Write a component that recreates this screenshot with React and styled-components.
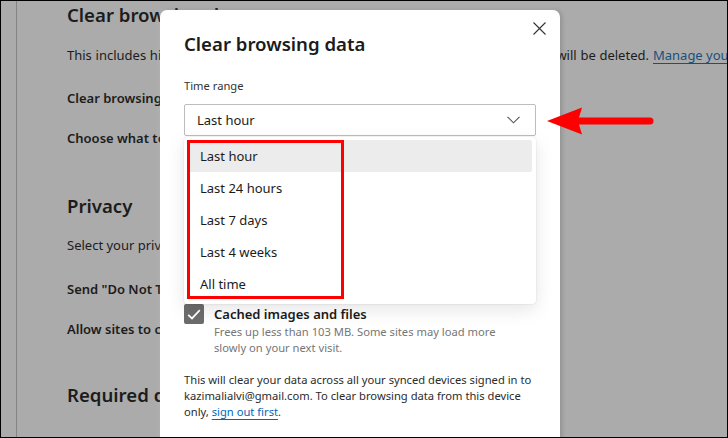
import React from "react";
import styled, { createGlobalStyle } from "styled-components";

const Global = createGlobalStyle`
  html, body { margin: 0; padding: 0; background: #fff; }
  body { font-family: "Noto Sans", "Open Sans", sans-serif; }
  * { box-sizing: border-box; }
`;

const Frame = styled.div`
  position: relative;
  width: 728px;
  height: 438px;
  overflow: hidden;
  display: flex;
  background: #ababab;
  border: 1px solid #000;
  font-family: "Noto Sans", "Open Sans", sans-serif;
`;

const Rail = styled.div`
  width: 16px;
  flex-shrink: 0;
  border-right: 1px solid #858585;
`;

const Page = styled.div`
  display: flex;
  flex-direction: column;
  padding-left: 50px;
  white-space: nowrap;
  color: #1c1c1c;
`;

const SectionTitle = styled.div`
  font-size: 18.6px;
  line-height: 28px;
  font-weight: 600;
  margin-top: ${(p) => p.$mt || 0}px;
`;

const PageText = styled.div`
  font-size: 13px;
  line-height: 20px;
  font-weight: ${(p) => (p.$strong ? 600 : 400)};
  margin-top: ${(p) => p.$mt || 0}px;
  word-spacing: ${(p) => (p.$loose ? "0.35px" : "normal")};
`;

const PageLink = styled.span`
  margin-left: 4px;
  word-spacing: normal;
  color: #18507e;
  text-decoration: underline;
  text-underline-offset: 3px;
`;

const Dialog = styled.div`
  position: absolute;
  left: 159px;
  top: 9px;
  width: 400px;
  height: 460px;
  background: #fff;
  border-radius: 7px 7px 0 0;
  box-shadow: 2px 0 4px rgba(0, 0, 0, 0.16), -1px 0 4px rgba(255, 255, 255, 0.15);
  padding: 0 24px;
  display: flex;
  flex-direction: column;
  color: #1b1b1b;
`;

const DialogHeader = styled.div`
  display: flex;
  justify-content: space-between;
  align-items: flex-start;
  margin-right: -10px;
`;

const DialogTitle = styled.div`
  margin-top: 20px;
  font-size: 18.6px;
  line-height: 28px;
  font-weight: 600;
`;

const CloseButton = styled.button`
  margin-top: 11px;
  width: 14px;
  height: 14px;
  padding: 0;
  border: 0;
  background: none;
  display: flex;
  align-items: center;
  justify-content: center;
`;

const FieldLabel = styled.div`
  margin-top: 20px;
  font-size: 11.2px;
  line-height: 16px;
  color: #333;
`;

const SelectWrap = styled.div`
  position: relative;
  margin-top: 10px;
  width: 352px;
`;

const SelectBox = styled.div`
  height: 32px;
  border: 1px solid #bdbdbd;
  border-radius: 2px;
  display: flex;
  align-items: center;
  justify-content: space-between;
  padding: 0 15px 0 12px;
  font-size: 13px;
  line-height: 30px;
  color: #1b1b1b;
`;

const Menu = styled.div`
  position: absolute;
  top: calc(100% + 1px);
  left: 0;
  right: 0;
  background: #fff;
  border-radius: 4px;
  padding: 3px 4px 4px;
  box-shadow: 0 0 2px rgba(0, 0, 0, 0.14), 0 6px 18px rgba(0, 0, 0, 0.1);
  z-index: 2;
`;

const MenuItem = styled.div`
  height: 32px;
  border-radius: 2px;
  padding-left: 12px;
  font-size: 13px;
  line-height: 32px;
  color: #1b1b1b;
  background: ${(p) => (p.$active ? "#ececec" : "transparent")};
`;

const CheckRow = styled.div`
  margin-top: 168px;
  display: flex;
  align-items: flex-start;
  gap: 10px;
`;

const CheckBox = styled.div`
  width: 20px;
  height: 20px;
  flex-shrink: 0;
  border-radius: 2px;
  background: #6c6c6c;
  display: flex;
  align-items: center;
  justify-content: center;
`;

const CheckText = styled.div`
  display: flex;
  flex-direction: column;
`;

const CheckLabel = styled.div`
  font-size: 13px;
  line-height: 20px;
  font-weight: 600;
  color: #1b1b1b;
`;

const CheckDesc = styled.div`
  font-size: 11.2px;
  line-height: 16px;
  color: #767676;
  white-space: nowrap;
`;

const Note = styled.div`
  margin-top: 16px;
  font-size: 11.2px;
  line-height: 16px;
  color: #2b2b2b;
  white-space: nowrap;
`;

const NoteLink = styled.span`
  color: #0067b8;
  text-decoration: underline;
  text-underline-offset: 3px;
`;

const Highlight = styled.div`
  position: absolute;
  left: 186px;
  top: 139px;
  width: 157px;
  height: 159px;
  border: 3px solid #ff0000;
  z-index: 5;
`;

const Arrow = styled.svg`
  position: absolute;
  left: 543px;
  top: 104px;
  z-index: 5;
`;

const options = ["Last hour", "Last 24 hours", "Last 7 days", "Last 4 weeks", "All time"];

export default function App() {
  return (
    <>
      <Global />
      <Frame>
        <Rail />
        <Page>
          <SectionTitle $mt={0}>Clear browsing data</SectionTitle>
          <PageText $mt={16} $loose>
            This includes history, passwords, cookies, and more. Only data from this profile{" "}
            will be deleted.<PageLink>Manage your data</PageLink>
          </PageText>
          <PageText $strong $mt={23}>Clear browsing data now</PageText>
          <PageText $strong $mt={20}>Choose what to clear every time you close the browser</PageText>
          <SectionTitle $mt={44}>Privacy</SectionTitle>
          <PageText $mt={15}>Select your privacy settings for Microsoft Edge.</PageText>
          <PageText $strong $mt={24}>Send "Do Not Track" requests</PageText>
          <PageText $strong $mt={20}>Allow sites to check if you have payment methods saved</PageText>
          <SectionTitle $mt={42}>Required diagnostic data</SectionTitle>
        </Page>

        <Dialog>
          <DialogHeader>
            <DialogTitle>Clear browsing data</DialogTitle>
            <CloseButton aria-label="Close">
              <svg width="13" height="13" viewBox="0 0 13 13">
                <path d="M0.5 0.5 L12.5 12.5 M12.5 0.5 L0.5 12.5" stroke="#333" strokeWidth="1.1" fill="none" />
              </svg>
            </CloseButton>
          </DialogHeader>
          <FieldLabel>Time range</FieldLabel>
          <SelectWrap>
            <SelectBox>
              <span>Last hour</span>
              <svg width="13" height="8" viewBox="0 0 13 8">
                <path d="M0.5 0.8 L6.5 6.8 L12.5 0.8" stroke="#555" strokeWidth="1.1" fill="none" />
              </svg>
            </SelectBox>
            <Menu>
              {options.map((o, i) => (
                <MenuItem key={o} $active={i === 0}>{o}</MenuItem>
              ))}
            </Menu>
          </SelectWrap>
          <CheckRow>
            <CheckBox>
              <svg width="14" height="11" viewBox="0 0 14 11">
                <path d="M1.2 5.8 L5 9.4 L12.8 1.2" stroke="#fff" strokeWidth="1.8" fill="none" />
              </svg>
            </CheckBox>
            <CheckText>
              <CheckLabel>Cached images and files</CheckLabel>
              <CheckDesc>
                Frees up less than 103 MB. Some sites may load more
                <br />
                slowly on your next visit.
              </CheckDesc>
            </CheckText>
          </CheckRow>
          <Note>
            This will clear your data across all your synced devices signed in to
            <br />
            kazimalialvi@gmail.com. To clear browsing data from this device
            <br />
            only, <NoteLink>sign out first</NoteLink>.
          </Note>
        </Dialog>

        <Highlight />
        <Arrow width="112" height="32" viewBox="0 0 112 32">
          <path d="M3 16 L38 2.5 L35 12.5 L106 12.5 A3.5 3.5 0 0 1 106 19.5 L35 19.5 L38 29.5 Z" fill="#ff0000" />
        </Arrow>
      </Frame>
    </>
  );
}
